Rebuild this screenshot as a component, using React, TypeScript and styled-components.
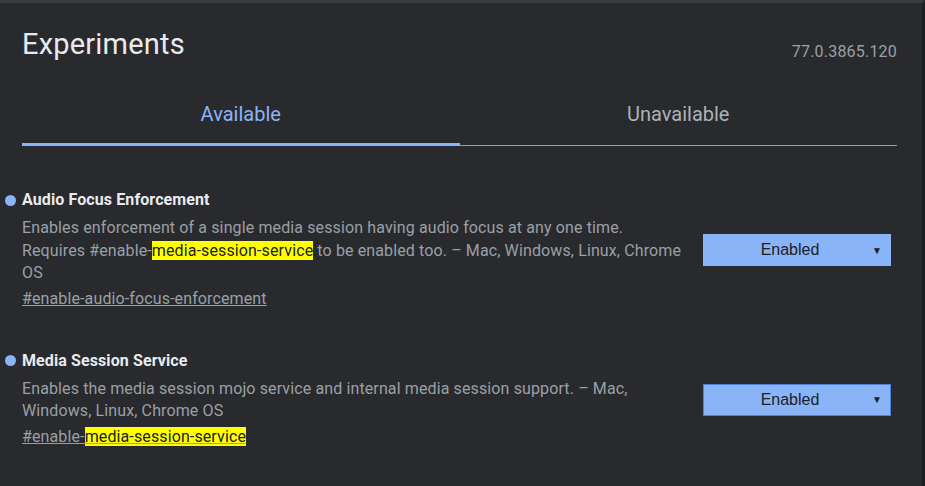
import React, { useState } from "react";
import styled, { createGlobalStyle } from "styled-components";

type Experiment = {
  name: string;
  description: React.ReactNode;
  link: React.ReactNode;
  focused?: boolean;
};

// built inside the component so the styled parts below are defined by then
function getExperiments(): Experiment[] {
  return [
    {
      name: "Audio Focus Enforcement",
      description: (
        <>
          Enables enforcement of a single media session having audio focus at any one time.
          <br />
          Requires #enable-<Mark>media-session-service</Mark> to be enabled too. – Mac, Windows,
          Linux, Chrome OS
        </>
      ),
      link: <>#enable-audio-focus-enforcement</>,
    },
    {
      name: "Media Session Service",
      description: (
        <>
          Enables the media session mojo service and internal media session support. – Mac,
          Windows, Linux, Chrome OS
        </>
      ),
      link: (
        <>
          #enable-<Mark>media-session-service</Mark>
        </>
      ),
      focused: true,
    },
  ];
}

function App() {
  const [tab, setTab] = useState<string>("available");
  const experiments = getExperiments();

  return (
    <>
      <GlobalStyle />
      <Page>
        <Header>
          <Title>Experiments</Title>
          <Version>77.0.3865.120</Version>
        </Header>
        <Tabs>
          <Tab $active={tab === "available"} onClick={() => setTab("available")}>
            Available
          </Tab>
          <Tab $active={tab === "unavailable"} onClick={() => setTab("unavailable")}>
            Unavailable
          </Tab>
        </Tabs>
        <List>
          {experiments.map((exp) => (
            <Row key={exp.name}>
              <Info>
                <Name>{exp.name}</Name>
                <Description>{exp.description}</Description>
                <Link>{exp.link}</Link>
              </Info>
              <Select $focused={exp.focused}>
                <span>Enabled</span>
                <Arrow>▼</Arrow>
              </Select>
            </Row>
          ))}
        </List>
      </Page>
    </>
  );
}

const GlobalStyle = createGlobalStyle`
  html, body {
    margin: 0;
    background: #292a2d;
  }
  * {
    box-sizing: border-box;
  }
`;

const Page = styled.div`
  width: 925px;
  height: 486px;
  overflow: hidden;
  background: #292a2d;
  border-top: 3px solid #3c3d40;
  border-right: 3px solid #1e1f21;
  padding: 0 25px 0 22px;
  font-family: Roboto, "Liberation Sans", sans-serif;
`;

const Header = styled.header`
  display: flex;
  justify-content: space-between;
  align-items: flex-start;
  padding-top: 24px;
`;

const Title = styled.h1`
  margin: 0;
  font-size: 29px;
  line-height: 34px;
  font-weight: 400;
  color: #e8eaed;
  letter-spacing: 0.2px;
`;

const Version = styled.span`
  margin-top: 15px;
  font-size: 16px;
  line-height: 20px;
  letter-spacing: 0.2px;
  color: #9aa0a6;
`;

const Tabs = styled.div`
  display: grid;
  grid-template-columns: 1fr 1fr;
  align-items: end;
`;

const Tab = styled.button<{ $active: boolean }>`
  padding: 40px 0 ${(props) => (props.$active ? "17px" : "19px")};
  background: none;
  border: none;
  border-bottom: ${(props) => (props.$active ? "3px solid #8ab4f8" : "1px solid #9aa0a6")};
  font-family: Roboto, "Liberation Sans", sans-serif;
  font-size: 20px;
  line-height: 24px;
  color: ${(props) => (props.$active ? "#8ab4f8" : "#aeb2b7")};
  cursor: pointer;
`;

const List = styled.div`
  display: flex;
  flex-direction: column;
  gap: 40px;
  padding-top: 44px;
`;

const Row = styled.div`
  display: grid;
  grid-template-columns: 1fr 188px;
  column-gap: 13px;
  align-items: center;
  padding-right: 6px;
`;

const Info = styled.div`
  display: flex;
  flex-direction: column;
`;

const Name = styled.div`
  display: flex;
  align-items: center;
  font-size: 16px;
  font-weight: 700;
  letter-spacing: 0.1px;
  color: #e8eaed;
  line-height: 20px;
  margin-bottom: 7px;

  &::before {
    content: "";
    width: 11px;
    height: 11px;
    border-radius: 50%;
    background: #8ab4f8;
    margin-left: -17px;
    margin-right: 6px;
  }
`;

const Description = styled.p`
  margin: 0;
  font-size: 16px;
  letter-spacing: 0.12px;
  line-height: 22.5px;
  color: #9aa0a6;
`;

const Mark = styled.mark`
  background: #ffff00;
  color: #202124;
`;

const Link = styled.a`
  align-self: flex-start;
  margin-top: 3.5px;
  font-size: 16px;
  letter-spacing: 0.12px;
  line-height: 22.5px;
  color: #9aa0a6;
  text-decoration: underline;
  cursor: pointer;
`;

const Select = styled.div<{ $focused?: boolean }>`
  position: relative;
  display: flex;
  align-items: center;
  justify-content: center;
  height: 32px;
  background: #8ab4f8;
  border: 1px solid ${(props) => (props.$focused ? "#4d82d6" : "#8ab4f8")};
  font-family: "Liberation Sans", Arial, sans-serif;
  font-size: 16px;
  color: #202124;
  padding-right: 14px;
`;

const Arrow = styled.span`
  position: absolute;
  right: 8px;
  font-size: 10px;
`;

export default App;
